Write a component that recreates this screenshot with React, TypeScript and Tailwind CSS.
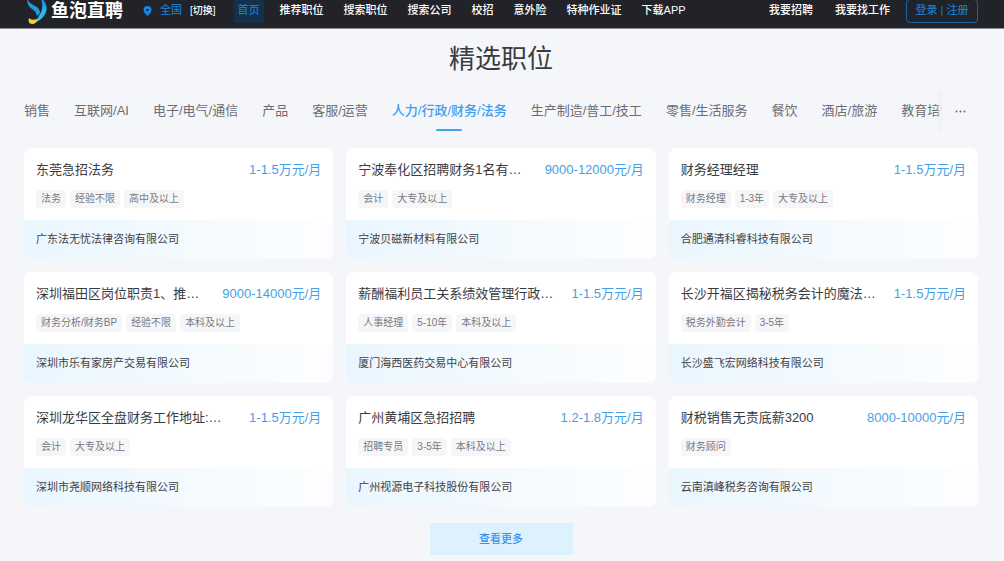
import React from 'react'
import clsx from 'clsx'

interface Job {
  title: string
  salary: string
  tags: string[]
  company: string
}

const navItems = ['首页', '推荐职位', '搜索职位', '搜索公司', '校招', '意外险', '特种作业证', '下载APP']

const categories = [
  '销售',
  '互联网/AI',
  '电子/电气/通信',
  '产品',
  '客服/运营',
  '人力/行政/财务/法务',
  '生产制造/普工/技工',
  '零售/生活服务',
  '餐饮',
  '酒店/旅游',
  '教育培训'
]

const jobs: Job[] = [
  {
    title: '东莞急招法务',
    salary: '1-1.5万元/月',
    tags: ['法务', '经验不限', '高中及以上'],
    company: '广东法无忧法律咨询有限公司'
  },
  {
    title: '宁波奉化区招聘财务1名有…',
    salary: '9000-12000元/月',
    tags: ['会计', '大专及以上'],
    company: '宁波贝磁新材料有限公司'
  },
  {
    title: '财务经理经理',
    salary: '1-1.5万元/月',
    tags: ['财务经理', '1-3年', '大专及以上'],
    company: '合肥通清科睿科技有限公司'
  },
  {
    title: '深圳福田区岗位职责1、推…',
    salary: '9000-14000元/月',
    tags: ['财务分析/财务BP', '经验不限', '本科及以上'],
    company: '深圳市乐有家房产交易有限公司'
  },
  {
    title: '薪酬福利员工关系绩效管理行政…',
    salary: '1-1.5万元/月',
    tags: ['人事经理', '5-10年', '本科及以上'],
    company: '厦门海西医药交易中心有限公司'
  },
  {
    title: '长沙开福区揭秘税务会计的魔法…',
    salary: '1-1.5万元/月',
    tags: ['税务外勤会计', '3-5年'],
    company: '长沙盛飞宏网络科技有限公司'
  },
  {
    title: '深圳龙华区全盘财务工作地址:…',
    salary: '1-1.5万元/月',
    tags: ['会计', '大专及以上'],
    company: '深圳市尧顺网络科技有限公司'
  },
  {
    title: '广州黄埔区急招招聘',
    salary: '1.2-1.8万元/月',
    tags: ['招聘专员', '3-5年', '本科及以上'],
    company: '广州视源电子科技股份有限公司'
  },
  {
    title: '财税销售无责底薪3200',
    salary: '8000-10000元/月',
    tags: ['财务顾问'],
    company: '云南滇峰税务咨询有限公司'
  }
]

const Logo: React.FC = () => (
  <a href="#" className="flex items-center gap-1 text-white">
    <svg width="21" height="32" viewBox="0 0 21 32" fill="none" aria-hidden="true">
      <defs>
        <linearGradient id="fishBody" x1="0" y1="0" x2="0" y2="1">
          <stop offset="0%" stopColor="#1479c9" />
          <stop offset="50%" stopColor="#22b4ee" />
          <stop offset="100%" stopColor="#3cc6e0" />
        </linearGradient>
      </defs>
      <path d="M1 4c2 4 5 5 8 7 3 1 5 4 5 7l-3 3c-1-4-2-5-5-7C3 12 1 9 1 4z" fill="#1f9be0" />
      <path d="M14 2c7 5 8 12 5 17-2 4-5 6-10 9 1-3 3-5 5-9 3-5 3-11 0-17z" fill="url(#fishBody)" />
      <path d="M3 23c2 2 4 2 8 1 0 3-2 5-5 5S2 26 3 23z" fill="#f6cf2c" />
    </svg>
    <span className="text-lg font-bold leading-6">鱼泡直聘</span>
  </a>
)

const Header: React.FC = () => (
  <header className="-mt-[7px] flex h-9 items-center whitespace-nowrap border-b border-[#8b8a93] bg-[#212328] pl-[26px] pr-[26px] text-[11px] font-medium text-white">
    <Logo />
    <div className="ml-5 flex items-center">
      <svg width="9" height="10" viewBox="0 0 9 10" aria-hidden="true">
        <path d="M4.500 0a4 4 0 0 1 4 4c0 2.500-2.500 4.500-4 6-1.500-1.500-4-3.500-4-6a4 4 0 0 1 4-4z" fill="#1585e8" />
        <circle cx="4.500" cy="4" r="1.300" fill="#212328" />
      </svg>
      <span className="ml-2 text-[#1a78c8]">全国</span>
      <button type="button" className="ml-2 text-[10px]">[切换]</button>
    </div>
    <nav className="ml-[18px] flex items-center gap-5">
      {navItems.map((item, i) => (
        <a
          key={item}
          href="#"
          className={clsx(i === 0 && '-mr-1 -my-1 bg-[#14304a] px-1 py-1 text-[#1a78c8]')}
        >
          {item}
        </a>
      ))}
    </nav>
    <div className="ml-auto flex items-center">
      <a href="#">我要招聘</a>
      <a href="#" className="ml-[22px]">我要找工作</a>
      <button
        type="button"
        className="ml-4 h-6 w-[72px] rounded-sm border border-[#1c63a0] text-[#1a78c8]"
      >
        登录 | 注册
      </button>
    </div>
  </header>
)

const CategoryTabs: React.FC = () => (
  <nav className="mt-3 flex h-10 text-[13px] text-[#6b6d73]">
    <div className="relative min-w-0 flex-1 overflow-hidden">
      <ul className="flex h-full gap-6 whitespace-nowrap">
        {categories.map(name => {
          const active = name === '人力/行政/财务/法务'
          return (
            <li key={name} className="relative">
              <a
                href="#"
                className={clsx('flex h-full items-center', active && 'font-medium text-[#3b9ff0]')}
              >
                {name}
              </a>
              {active && (
                <span className="absolute bottom-0 left-1/2 h-0.5 w-[26px] -translate-x-1/2 rounded-full bg-[#3ea4ea]" />
              )}
            </li>
          )
        })}
      </ul>
      {/* Soft edge where the list is cut off */}
      <div className="pointer-events-none absolute inset-y-0 right-0 w-1.5 bg-gradient-to-r from-transparent to-[#eceef1]/80" />
    </div>
    <button type="button" aria-label="更多分类" className="w-9 text-center">
      <svg className="mx-auto" width="11" height="3" viewBox="0 0 11 3" fill="currentColor" aria-hidden="true">
        <circle cx="1.500" cy="1.500" r="1" />
        <circle cx="5.500" cy="1.500" r="1" />
        <circle cx="9.500" cy="1.500" r="1" />
      </svg>
    </button>
  </nav>
)

const JobCard: React.FC<{ job: Job }> = ({ job }) => (
  <article className="overflow-hidden whitespace-nowrap rounded-lg bg-white">
    <div className="px-3 pb-3 pt-3">
      <div className="flex justify-between text-[13px] leading-5">
        <h3 className="text-[#3a3b3f]">{job.title}</h3>
        <span className="text-[#459fe8]">{job.salary}</span>
      </div>
      <ul className="mt-2.5 flex gap-1 text-[10px] text-[#77797e]">
        {job.tags.map(tag => (
          <li key={tag} className="h-[18px] rounded-sm bg-[#f6f6f8] px-[5px] leading-[18px]">
            {tag}
          </li>
        ))}
      </ul>
    </div>
    <div className="h-[39px] bg-gradient-to-r from-[#eaf6fe] to-[#fdfeff] px-3 text-[11px] leading-[39px] text-[#3f4146]">
      <a href="#">{job.company}</a>
    </div>
  </article>
)

const App: React.FC = () => {
  return (
    <div className="min-h-screen overflow-hidden bg-[#f5f6fa] font-['Liberation_Sans','Noto_Sans_CJK_SC',sans-serif]">
      <Header />
      <main className="pb-1.5 pl-6 pr-[26px]">
        <h2 className="pt-2.5 text-center text-[26px] leading-10 text-[#3a3b3f]">精选职位</h2>
        <CategoryTabs />
        <section className="mt-[17px] grid grid-cols-3 gap-[13px]">
          {jobs.map(job => (
            <JobCard key={job.title} job={job} />
          ))}
        </section>
        <div className="mt-4 flex justify-center">
          <button type="button" className="h-8 w-[143px] bg-[#def1ff] text-[11px] font-medium text-[#3b94e8]">
            查看更多
          </button>
        </div>
      </main>
    </div>
  )
}

export default App
